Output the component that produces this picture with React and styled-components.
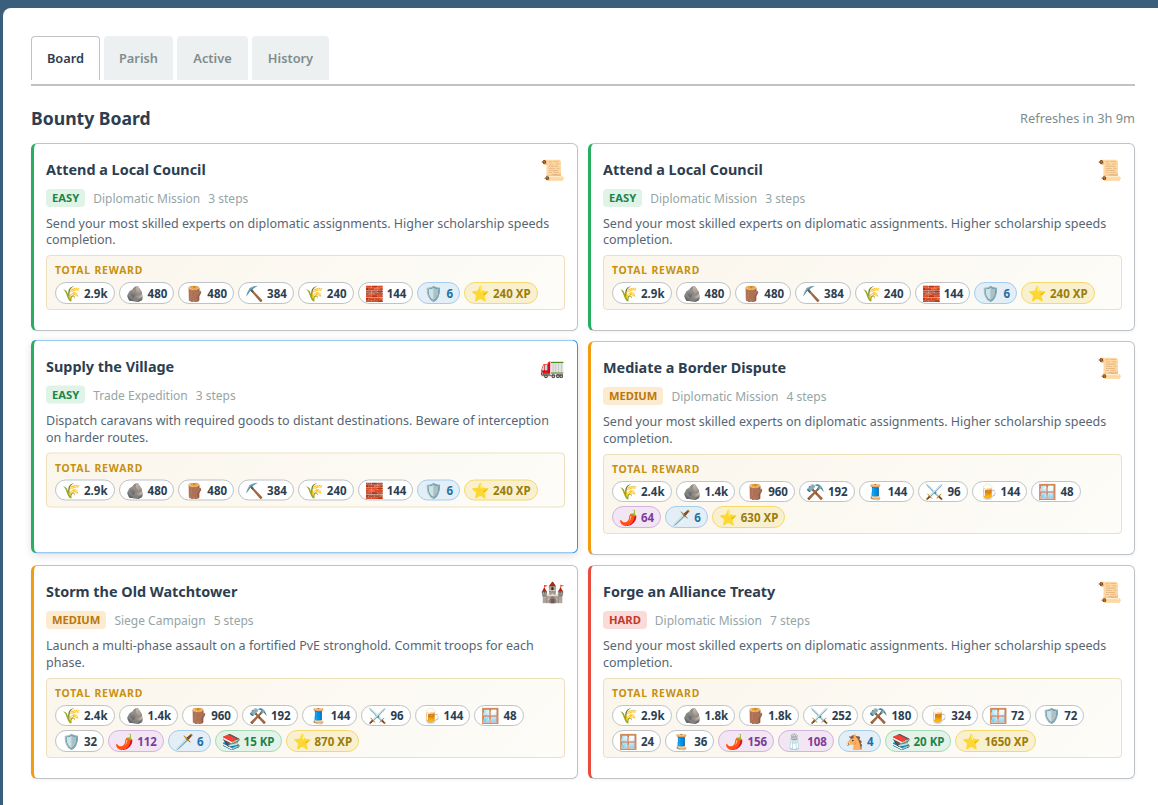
import React from 'react';
import styled, { createGlobalStyle } from 'styled-components';

const GlobalStyle = createGlobalStyle`
  html, body { margin: 0; padding: 0; background: #3a5f7d; }
  body { font-family: "Noto Sans", sans-serif; color: #2c3e50; }
`;

const councilDesc = 'Send your most skilled experts on diplomatic assignments. Higher scholarship speeds completion.';

const easyRewards = [
  ['🌾', '2.9k'], ['🪨', '480'], ['🪵', '480'], ['⛏️', '384'], ['🌾', '240'], ['🧱', '144'],
  ['🛡️', '6', 'blue'], ['⭐', '240 XP', 'gold'],
];

const mediumRewards = [
  ['🌾', '2.4k'], ['🪨', '1.4k'], ['🪵', '960'], ['⚒️', '192'], ['🧵', '144'], ['⚔️', '96'], ['🍺', '144'], ['🪟', '48'],
];

const tabs = [
  { label: 'Board', width: 69, active: true },
  { label: 'Parish', width: 69 },
  { label: 'Active', width: 71 },
  { label: 'History', width: 77 },
];

const bounties = [
  { title: 'Attend a Local Council', icon: '📜', level: 'easy', kind: 'Diplomatic Mission', steps: 3, desc: councilDesc, rewards: easyRewards },
  { title: 'Attend a Local Council', icon: '📜', level: 'easy', kind: 'Diplomatic Mission', steps: 3, desc: councilDesc, rewards: easyRewards },
  {
    title: 'Supply the Village', icon: '🚛', level: 'easy', kind: 'Trade Expedition', steps: 3, hovered: true,
    desc: 'Dispatch caravans with required goods to distant destinations. Beware of interception on harder routes.',
    rewards: easyRewards,
  },
  {
    title: 'Mediate a Border Dispute', icon: '📜', level: 'medium', kind: 'Diplomatic Mission', steps: 4, desc: councilDesc,
    rewards: [...mediumRewards, ['🌶️', '64', 'purple'], ['🗡️', '6', 'blue'], ['⭐', '630 XP', 'gold']],
  },
  {
    title: 'Storm the Old Watchtower', icon: '🏰', level: 'medium', kind: 'Siege Campaign', steps: 5,
    desc: 'Launch a multi-phase assault on a fortified PvE stronghold. Commit troops for each phase.',
    rewards: [...mediumRewards, ['🛡️', '32'], ['🌶️', '112', 'purple'], ['🗡️', '6', 'blue'], ['📚', '15 KP', 'green'], ['⭐', '870 XP', 'gold']],
  },
  {
    title: 'Forge an Alliance Treaty', icon: '📜', level: 'hard', kind: 'Diplomatic Mission', steps: 7, desc: councilDesc,
    rewards: [
      ['🌾', '2.9k'], ['🪨', '1.8k'], ['🪵', '1.8k'], ['⚔️', '252'], ['⚒️', '180'], ['🍺', '324'], ['🪟', '72'], ['🛡️', '72'],
      ['🪟', '24'], ['🧵', '36'], ['🌶️', '156', 'purple'], ['🧂', '108', 'purple'], ['🐴', '4', 'blue'], ['📚', '20 KP', 'green'], ['⭐', '1650 XP', 'gold'],
    ],
  },
];

const levelColors = {
  easy: { edge: '#27ae60', bg: '#dff3e7', fg: '#1e8449' },
  medium: { edge: '#f39c12', bg: '#fdebd0', fg: '#b9770e' },
  hard: { edge: '#e74c3c', bg: '#fadbd8', fg: '#c0392b' },
};

const pillColors = {
  plain: { bg: '#fff', border: '#bdc3c7', fg: '#2c3e50' },
  blue: { bg: '#e3eef7', border: '#a3cdee', fg: '#2471a3' },
  gold: { bg: '#f9f0cf', border: '#f6d96b', fg: '#9a7d0a' },
  purple: { bg: '#f2e6f5', border: '#d2b4de', fg: '#7d3c98' },
  green: { bg: '#e3f3e9', border: '#a0dcb6', fg: '#1e8449' },
};

const Shell = styled.main`
  box-sizing: border-box;
  min-height: 797px;
  margin: 8px 0 0 3px;
  padding: 28px 23px 26px 28px;
  background: #fff;
  border-radius: 8px 0 0 0;
`;

const Tabs = styled.nav`
  display: flex;
  gap: 4px;
  border-bottom: 2px solid #bdc3c7;
  padding-bottom: 4px;
  margin-bottom: 18px;
`;

const Tab = styled.button`
  box-sizing: border-box;
  width: ${(p) => p.$width}px;
  height: 44px;
  padding: 0 0 1px;
  font: 600 12.8px "Noto Sans", sans-serif;
  color: ${(p) => (p.$active ? '#2c3e50' : '#7f8c8d')};
  background: ${(p) => (p.$active ? '#fff' : '#ecf0f1')};
  border: ${(p) => (p.$active ? '1px solid #bdc3c7' : 'none')};
  border-bottom: none;
  border-radius: 4px 4px 0 0;
`;

const BoardHeader = styled.header`
  display: flex;
  justify-content: space-between;
  align-items: center;
  height: 27px;
  margin-bottom: 12px;
`;

const BoardTitle = styled.h2`
  margin: 0;
  font-size: 17.6px;
  font-weight: 700;
`;

const Refresh = styled.span`
  font-size: 12.8px;
  color: #7f8c8d;
`;

const Grid = styled.section`
  display: grid;
  grid-template-columns: 1fr 1fr;
  gap: 10px;
`;

const Card = styled.article`
  box-sizing: border-box;
  padding: 13px 12px 20px;
  background: #fff;
  border: 1px solid ${(p) => (p.$hovered ? '#3498db' : '#bdc3c7')};
  border-left: 3px solid ${(p) => levelColors[p.$level].edge};
  border-radius: 6px;
  box-shadow: ${(p) => (p.$hovered ? '0 2px 8px rgba(0, 0, 0, 0.12)' : '0 1px 3px rgba(0, 0, 0, 0.06)')};
  transform: ${(p) => (p.$hovered ? 'translateY(-1.5px)' : 'none')};
`;

const CardTop = styled.div`
  display: flex;
  justify-content: space-between;
  align-items: center;
  height: 24px;
  margin-bottom: 8px;
`;

const CardTitle = styled.h3`
  margin: 0;
  font-size: 14.4px;
  font-weight: 700;
`;

const CardIcon = styled.span`
  margin-top: 2px;
  font-size: 20px;
  line-height: 24px;
`;

const Meta = styled.div`
  display: flex;
  align-items: center;
  gap: 8px;
  height: 18px;
  margin-bottom: 9px;
  font-size: 12px;
  color: #95a5a6;
`;

const Level = styled.span`
  padding: 2px 6px;
  border-radius: 4px;
  font-size: 11.2px;
  line-height: 14px;
  font-weight: 700;
  color: ${(p) => levelColors[p.$level].fg};
  background: ${(p) => levelColors[p.$level].bg};
`;

const Desc = styled.p`
  margin: 0 0 6.9px;
  font-size: 12.5px;
  line-height: 16.25px;
  color: #566573;
`;

const Reward = styled.div`
  padding: 7px 8px 5.4px;
  background: linear-gradient(135deg, #fbf6ec, #fdfcf8);
  border: 1px solid #eedfbd;
  border-radius: 4px;
`;

const RewardLabel = styled.div`
  font-size: 10.4px;
  line-height: 14px;
  font-weight: 700;
  letter-spacing: 0.8px;
  color: #c8900f;
  margin-bottom: 5px;
`;

const Pills = styled.div`
  display: flex;
  flex-wrap: wrap;
  gap: 4px;
`;

const Pill = styled.span`
  display: inline-flex;
  align-items: center;
  gap: 3px;
  height: 21.6px;
  box-sizing: border-box;
  padding: 0 6px;
  font-size: 11.52px;
  font-weight: 700;
  color: ${(p) => pillColors[p.$tone].fg};
  background: ${(p) => pillColors[p.$tone].bg};
  border: 1px solid ${(p) => pillColors[p.$tone].border};
  border-radius: 11px;
`;

const PillIcon = styled.span`
  font-size: 15px;
  line-height: 1;
`;

const BountyCard = ({ bounty }) => (
  <Card $level={bounty.level} $hovered={bounty.hovered}>
    <CardTop>
      <CardTitle>{bounty.title}</CardTitle>
      <CardIcon>{bounty.icon}</CardIcon>
    </CardTop>
    <Meta>
      <Level $level={bounty.level}>{bounty.level.toUpperCase()}</Level>
      <span>{bounty.kind}</span>
      <span>{`${bounty.steps} steps`}</span>
    </Meta>
    <Desc>{bounty.desc}</Desc>
    <Reward>
      <RewardLabel>TOTAL REWARD</RewardLabel>
      <Pills>
        {bounty.rewards.map(([icon, value, tone], i) => (
          <Pill key={i} $tone={tone || 'plain'}>
            <PillIcon>{icon}</PillIcon>
            {value}
          </Pill>
        ))}
      </Pills>
    </Reward>
  </Card>
);

const App = () => (
  <>
    <GlobalStyle />
    <Shell>
      <Tabs>
        {tabs.map((t) => <Tab key={t.label} $active={t.active} $width={t.width}>{t.label}</Tab>)}
      </Tabs>
      <BoardHeader>
        <BoardTitle>Bounty Board</BoardTitle>
        <Refresh>Refreshes in 3h 9m</Refresh>
      </BoardHeader>
      <Grid>
        {bounties.map((b, i) => <BountyCard key={i} bounty={b} />)}
      </Grid>
    </Shell>
  </>
);

export default App;
